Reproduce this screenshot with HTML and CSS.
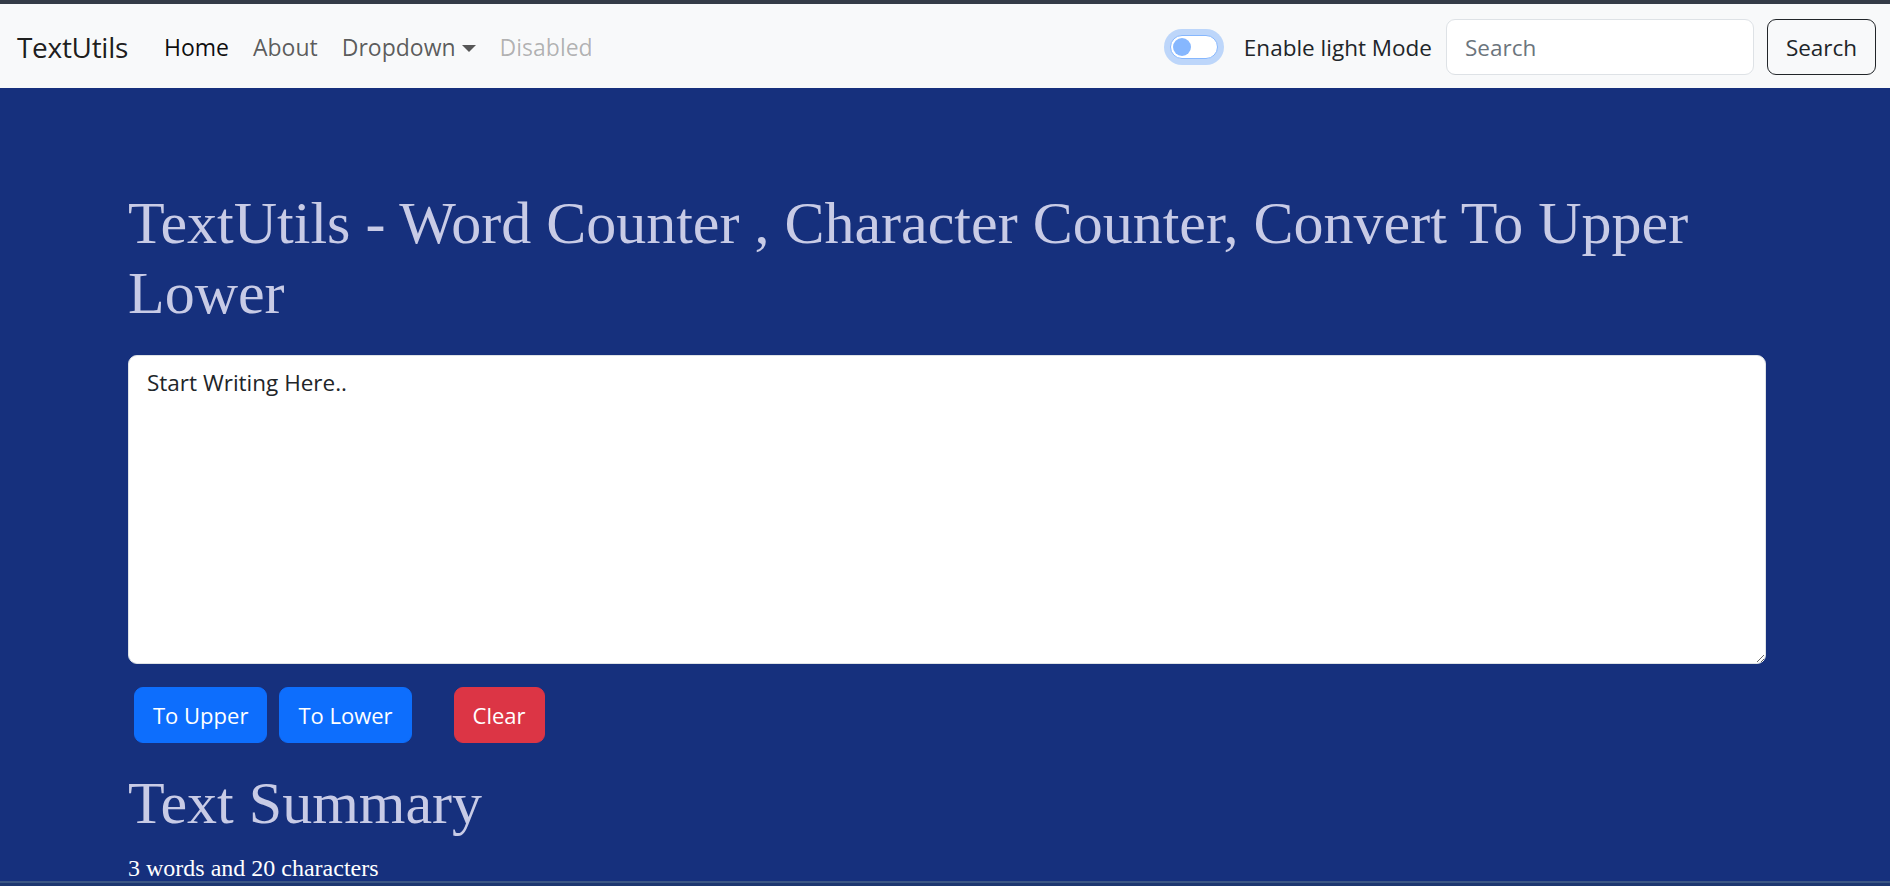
FILE: index.html
```html
<!DOCTYPE html>
<html lang="en">
<head>
<meta charset="utf-8">
<title>TextUtils</title>
<link rel="stylesheet" href="styles.css">
</head>
<body>
<div class="topstrip"></div>
<nav class="navbar">
  <a class="brand" href="#">TextUtils</a>
  <ul class="nav">
    <li><a class="nav-link active" href="#">Home</a></li>
    <li><a class="nav-link" href="#">About</a></li>
    <li><a class="nav-link dropdown-toggle" href="#">Dropdown</a></li>
    <li><a class="nav-link disabled">Disabled</a></li>
  </ul>
  <div class="nav-right">
    <div class="form-switch">
      <span class="switch"><span class="knob"></span></span>
      <label class="switch-label">Enable light Mode</label>
    </div>
    <form class="search">
      <input class="search-input" type="search" placeholder="Search">
      <button class="btn-outline" type="button">Search</button>
    </form>
  </div>
</nav>
<main class="container">
  <h1 class="title">TextUtils - Word Counter , Character Counter, Convert To Upper Lower</h1>
  <textarea class="box" rows="8">Start Writing Here..</textarea>
  <div class="actions">
    <button class="btn btn-primary" type="button">To Upper</button>
    <button class="btn btn-primary" type="button">To Lower</button>
    <button class="btn btn-danger" type="button">Clear</button>
  </div>
  <h1 class="summary">Text Summary</h1>
  <p class="count">3 words and 20 characters</p>
</main>
<div class="bottombar"></div>
</body>
</html>
```
FILE: styles.css
```css
* { box-sizing: border-box; }
html, body { margin: 0; padding: 0; }
body {
  background: #16307d;
  overflow: hidden;
  height: 886px;
  font-family: "Liberation Serif", "Times New Roman", serif;
}
.topstrip { height: 4px; background: #343b47; }

.navbar {
  height: 84px;
  background: #f8f9fa;
  display: flex;
  align-items: center;
  padding: 2px 14px 0 17px;
  font-family: "Open Sans", "Noto Sans", sans-serif;
  font-size: 22.5px;
}
.brand {
  font-size: 28px;
  color: rgba(0,0,0,.9);
  text-decoration: none;
  margin-right: 24px;
  letter-spacing: -0.3px;
}
.nav { list-style: none; margin: 0; padding: 0; display: flex; font-size: 23px; }
.nav-link {
  display: block;
  padding: 0 12px;
  color: rgba(0,0,0,.65);
  text-decoration: none;
}
.nav-link.active { color: rgba(0,0,0,.95); }
.nav-link.disabled { color: rgba(0,0,0,.3); }
.dropdown-toggle::after {
  content: "";
  display: inline-block;
  margin-left: 6px;
  vertical-align: 4px;
  border-top: 7px solid rgba(0,0,0,.65);
  border-left: 7px solid transparent;
  border-right: 7px solid transparent;
}
.nav-right { margin-left: auto; display: flex; align-items: center; }
.form-switch { display: flex; align-items: center; margin-right: 14px; }
.switch {
  width: 48px; height: 24px;
  border: 1.5px solid #86b7fe;
  border-radius: 12px;
  background: #fff;
  box-shadow: 0 0 0 6px rgba(13,110,253,.25);
  display: flex; align-items: center;
  padding-left: 2px;
}
.knob { width: 18px; height: 18px; border-radius: 50%; background: #86b7fe; }
.switch-label { margin-left: 26px; color: #212529; }
.search { display: flex; align-items: center; margin: 0; }
.search-input {
  width: 308px; height: 56px;
  border: 1.5px solid #dee2e6;
  border-radius: 9px;
  padding: 0 18px;
  font: inherit;
  color: #212529;
  background: #fff;
  margin-right: 13px;
  outline: none;
}
.search-input::placeholder { color: #6c757d; }
.btn-outline {
  width: 109px; height: 56px;
  border: 1.5px solid #212529;
  border-radius: 9px;
  background: transparent;
  color: #212529;
  font: inherit;
  padding: 0;
}

.container { width: 1638px; margin-left: 128px; padding-top: 100px; }
.title, .summary {
  font-size: 60px;
  line-height: 70px;
  font-weight: 400;
  color: #c8cbe6;
  margin: 0;
}
.title { margin-bottom: 27px; }
.box {
  display: block;
  width: 1638px; height: 309px;
  border: 1.5px solid #dee2e6;
  border-radius: 9px;
  padding: 9px 18px;
  font-family: "Open Sans", "Noto Sans", sans-serif;
  font-size: 22.5px;
  line-height: 36px;
  color: #212529;
  background: #fff;
  resize: vertical;
  margin: 0 0 23px;
  outline: none;
}
.actions { display: flex; gap: 12px; padding-left: 6px; height: 56px; }
.btn {
  height: 56px;
  padding: 0 18px;
  border: 1.5px solid transparent;
  border-radius: 9px;
  color: #fff;
  font-family: "Open Sans", "Noto Sans", sans-serif;
  font-size: 22px;
}
.btn-primary { background: #0d6efd; border-color: #0d6efd; }
.btn-danger { background: #dc3545; border-color: #dc3545; margin-left: 30px; }
.summary { margin-top: 25px; }
.count {
  margin: 12px 0 0;
  font-size: 24px;
  line-height: 36px;
  color: #fff;
}
.bottombar {
  position: fixed; left: 0; right: 0; bottom: 0;
  height: 5px;
  background: #1d3770;
  border-top: 2px solid #3b5684;
}
```
